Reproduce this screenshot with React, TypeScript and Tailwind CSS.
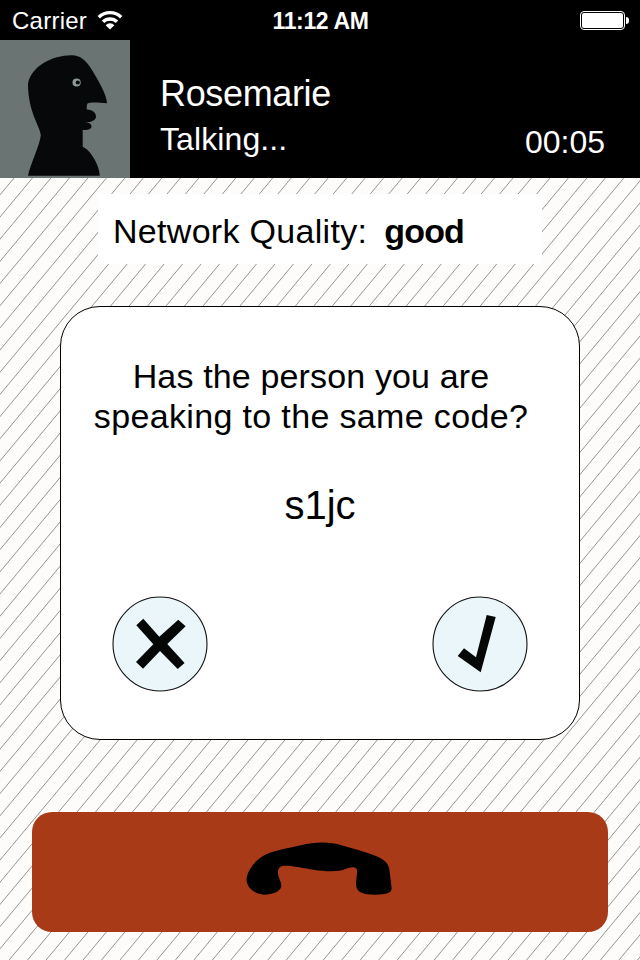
const lines = Array.from({ length: 80 }, (_, i) => 194.8 + (i - 1) * 22.176);

function Hatching() {
  return (
    <svg className="absolute inset-0 h-full w-full" viewBox="0 0 640 960" aria-hidden="true">
      <g stroke="#949492" strokeWidth="1">
        {lines.map((y) => (
          <line key={y} x1="-10" y1={y + 12} x2="650" y2={y - 780} />
        ))}
      </g>
    </svg>
  );
}

function StatusBar() {
  return (
    <div className="flex h-10 items-center justify-between bg-black pl-3 pr-[11px] text-white">
      <div className="flex w-[200px] items-center gap-[10px]">
        <span className="pt-px text-[24px] leading-10 tracking-[0.25px]">Carrier</span>
        <svg width="26" height="20" viewBox="0 0 26 20" fill="none" stroke="white" strokeWidth="3.4">
          <path d="M1.8 7.2A16 16 0 0 1 24.2 7.2" />
          <path d="M6 11.8A10 10 0 0 1 20 11.8" />
          <path d="M8.6 15.2A5.8 5.8 0 0 1 17.4 15.2L13 19.5Z" fill="white" stroke="none" />
        </svg>
      </div>
      <span className="pt-px text-[23px] font-bold leading-10 tracking-[-0.35px]">11:12 AM</span>
      <div className="flex w-[200px] items-center justify-end gap-px">
        <div className="h-[19px] w-[45px] rounded-[4px] border border-white p-px">
          <div className="h-full w-full rounded-[2px] bg-white" />
        </div>
        <div className="h-[7px] w-[3px] rounded-r-full bg-white" />
      </div>
    </div>
  );
}

function Avatar() {
  return (
    <svg className="h-[138px] w-[130px] shrink-0 bg-[#697473]" viewBox="0 40 130 138">
      <path
        d="M28 175.8C30 165 40 145 40.8 135C40 126 28 112 28 84C31 66 53 55 72 55.3C80 55.5 86 60 92 70C98 80 107 95 107 103.3C101 103 91 101.5 87.5 103.5C86.5 105 86.8 107 86.8 109.5C92 109.5 96 112.5 96 116.5C96 120.5 91 122.5 85 122.3C89 122.5 91.5 124 91.5 126.5C91.5 129.5 87 130 82.7 130L82.7 147C90 149 100 166 99.7 175.8Z"
        fill="#060809"
      />
      <circle cx="76.6" cy="82.5" r="4.1" fill="#8b9999" />
      <circle cx="77.8" cy="82.5" r="2.1" fill="#060809" />
    </svg>
  );
}

function CallHeader() {
  return (
    <header className="flex h-[138px] bg-black text-white">
      <Avatar />
      <div className="flex flex-1 flex-col pl-[30px] pt-8">
        <div className="h-[47px] text-[36px] leading-[44px] tracking-[-0.35px]">Rosemarie</div>
        <div className="text-[32px] leading-[40px] tracking-[0.1px]">Talking...</div>
      </div>
      <div className="pr-[35px] pt-[82px] text-[32px] leading-10">00:05</div>
    </header>
  );
}

function RoundButton({ label, children }: { label: string; children: React.ReactNode }) {
  return (
    <button aria-label={label} className="h-24 w-24 rounded-full">
      <svg className="h-full w-full" viewBox="0 0 96 96" fill="#050707">
        <circle cx="48" cy="48" r="47" fill="#eaf6f9" stroke="#111" strokeWidth="1.1" />
        {children}
      </svg>
    </button>
  );
}

export default function App() {
  return (
    <div className="relative h-[960px] w-[640px] overflow-hidden bg-[#fdfcfb] font-['Liberation_Sans',Arial,sans-serif] text-black">
      <Hatching />
      <div className="relative flex h-full flex-col">
        <StatusBar />
        <CallHeader />
        <div className="ml-[98px] mt-4 flex h-[70px] w-[444px] items-center whitespace-pre bg-white pl-[15px] pt-[3px] text-[34px] leading-10">
          <span className="tracking-[0.3px]">Network Quality:</span>
          <span className="ml-[17px] font-bold tracking-[-0.8px]">good</span>
        </div>
        <section className="mx-[60px] mt-[42px] flex h-[434px] flex-col rounded-[40px] border border-black bg-white">
          <p className="w-[500px] pt-[49px] text-center text-[34px] leading-10">
            <span className="block tracking-[0.15px]">Has the person you are</span>
            <span className="block tracking-[0.35px]">speaking to the same code?</span>
          </p>
          <p className="pt-[44px] text-center text-[40px] leading-[50px]">s1jc</p>
          <div className="mt-[66px] flex justify-between px-[51px]">
            <RoundButton label="No">
              <path d="M31.3 22.7L47.3 40.7L66.3 23.7L73.6 30.3L55.3 48L72.6 67L65.7 73L48 55L31 72.7L24 66L41.3 48.3L24.3 29.3Z" />
            </RoundButton>
            <RoundButton label="Yes">
              <path d="M54.7 19L63.7 21L48.7 76.3L25.7 60L32 52.3L44 61.3Z" />
            </RoundButton>
          </div>
        </section>
        <button aria-label="End call" className="mx-8 mt-[72px] flex h-[120px] justify-center rounded-[20px] bg-[#a93a18]">
          <svg className="h-[90px] w-[180px] mt-[13px]" viewBox="0 0 540 270">
            <path d="M93 97C125 76 175 70 213 61C255 50 300 50 335 61C370 71 400 80 432 91C457 100 475 112 478 133L485 190C485 204 470 209 435 209C400 209 378 203 378 177C378 159 384 141 380 132C374 123 360 128 348 131C328 141 290 140 250 134C225 130 190 122 168 122C150 122 143 128 144 147C147 163 154 171 154 184C151 200 128 209 103 209C72 208 46 184 50 158C54 138 71 112 93 97Z" />
          </svg>
        </button>
      </div>
    </div>
  );
}
